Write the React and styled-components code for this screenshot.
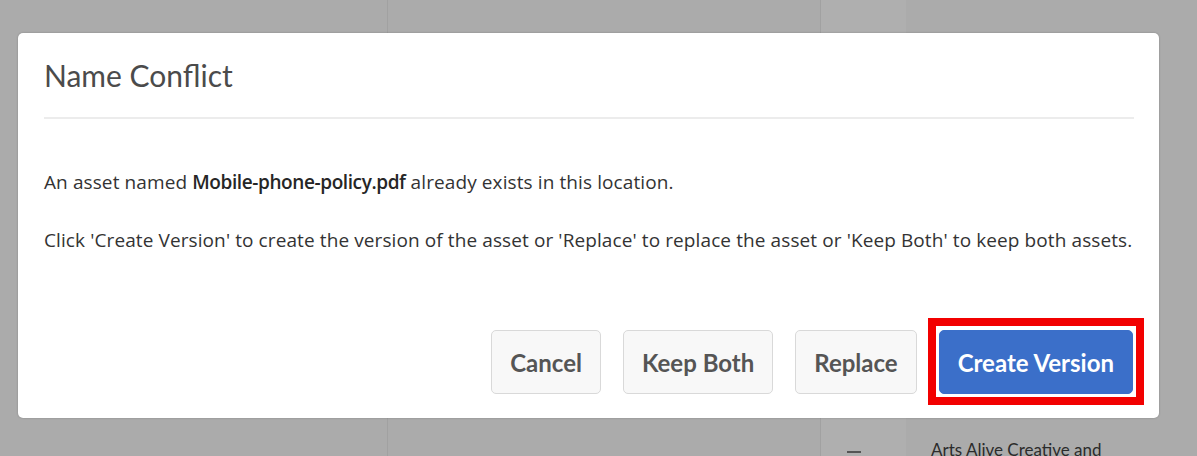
import React from "react";
import styled, { createGlobalStyle } from "styled-components";

const GlobalStyle = createGlobalStyle`
  html, body {
    margin: 0;
    padding: 0;
    background: #ababab;
  }
  body {
    font-family: Lato, "Open Sans", Arial, sans-serif;
  }
`;

const Page = styled.div`
  position: relative;
  width: 1197px;
  height: 456px;
  overflow: hidden;
  background: #ababab;
`;

const Backdrop = styled.div`
  display: flex;
  height: 100%;
`;

const Column = styled.div`
  width: ${(p) => p.width}px;
  flex: ${(p) => (p.width ? "none" : "1")};
  background: ${(p) => (p.light ? "#afafaf" : "#ababab")};
  border-left: ${(p) => (p.divided ? "1px solid #a1a1a1" : "none")};
  box-sizing: border-box;
  padding-top: 440px;
  padding-left: ${(p) => p.indent || 0}px;
`;

const Dash = styled.div`
  width: 14px;
  height: 2px;
  margin-top: 11px;
  background: #555555;
`;

const RowLabel = styled.div`
  font-size: 17px;
  line-height: 20px;
  color: #2b2b2b;
`;

const Modal = styled.div`
  position: absolute;
  left: 18px;
  top: 33px;
  width: 1141px;
  height: 385px;
  box-sizing: border-box;
  padding: 24px 25px 24px 26px;
  background: #ffffff;
  border-radius: 5px;
  box-shadow: 0 0 2px rgba(0, 0, 0, 0.25);
  display: flex;
  flex-direction: column;
`;

const Title = styled.h1`
  margin: 0;
  font-size: 30px;
  line-height: 36px;
  font-weight: 400;
  color: #4b4b4b;
  padding-bottom: 24px;
  border-bottom: 2px solid #ececec;
`;

const Body = styled.div`
  padding-top: 51px;
  display: flex;
  flex-direction: column;
  gap: 34px;
`;

const Text = styled.p`
  margin: 0;
  font-family: "Open Sans", Lato, Arial, sans-serif;
  font-size: 19px;
  line-height: 24px;
  letter-spacing: 0.1px;
  color: #333333;
  white-space: nowrap;

  strong {
    font-weight: 600;
    letter-spacing: -0.4px;
    color: #262626;
  }
`;

const Footer = styled.div`
  margin-top: auto;
  display: flex;
  justify-content: flex-end;
  gap: 22px;
  padding-right: 1px;
`;

const Button = styled.button`
  position: relative;
  height: 64px;
  padding: 0 18px;
  border-radius: 5px;
  font-family: Lato, "Open Sans", Arial, sans-serif;
  font-size: 24px;
  font-weight: 700;
  cursor: pointer;
  border: 1px solid ${(p) => (p.primary ? "#3b6fc9" : "#d9d9d9")};
  background: ${(p) => (p.primary ? "#3b6fc9" : "#f8f8f8")};
  color: ${(p) => (p.primary ? "#ffffff" : "#555555")};

  &::after {
    content: "";
    display: ${(p) => (p.highlight ? "block" : "none")};
    position: absolute;
    inset: -13px -12px -12px -12px;
    border: 8px solid #f20000;
    pointer-events: none;
  }
`;

export default function App() {
  return (
    <>
      <GlobalStyle />
      <Page>
        <Backdrop>
          <Column width={387} />
          <Column width={433} divided />
          <Column width={86} light divided indent={26}>
            <Dash />
          </Column>
          <Column indent={25}>
            <RowLabel>Arts Alive Creative and</RowLabel>
          </Column>
        </Backdrop>

        <Modal>
          <Title>Name Conflict</Title>
          <Body>
            <Text>
              An asset named <strong>Mobile-phone-policy.pdf</strong> already
              exists in this location.
            </Text>
            <Text>
              Click 'Create Version' to create the version of the asset or
              'Replace' to replace the asset or 'Keep Both' to keep both assets.
            </Text>
          </Body>
          <Footer>
            <Button>Cancel</Button>
            <Button>Keep Both</Button>
            <Button>Replace</Button>
            <Button primary highlight>
              Create Version
            </Button>
          </Footer>
        </Modal>
      </Page>
    </>
  );
}
